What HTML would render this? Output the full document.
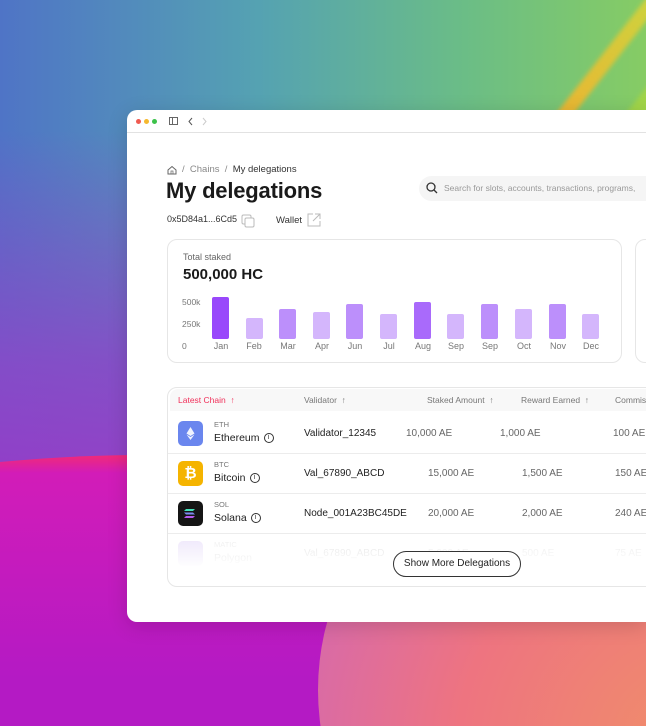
<!DOCTYPE html>
<html><head><meta charset="utf-8"><style>
*{box-sizing:border-box;margin:0;padding:0}
html,body{width:646px;height:726px;overflow:hidden}
body{position:relative;font-family:"Liberation Sans",sans-serif;background:#6a80c0}
.bg{position:absolute;left:0;top:0;width:646px;height:726px;overflow:hidden;
background:linear-gradient(90deg,#4f74c6 0%,#55a2b2 40%,#6bbd86 72%,#86cc64 100%);}
.bgv{position:absolute;inset:0;background:linear-gradient(180deg,rgba(0,0,0,0) 0%,rgba(0,0,0,0) 18%,rgba(140,70,200,.85) 50%,rgba(180,30,200,1) 100%)}
.mag{position:absolute;left:-700px;top:455px;width:1700px;height:900px;border-radius:50%;background:linear-gradient(180deg,#f02a78 0,#d21cb8 2%,#b41ac4 25%,#b01ac0 100%)}
.peach{position:absolute;left:318px;top:390px;width:700px;height:600px;border-radius:50%;background:radial-gradient(ellipse at 55% 60%,#f09068 0%,#ee7480 45%,#d86aa8 75%)}
.stripe{position:absolute;left:600px;top:-40px;width:14px;height:200px;background:linear-gradient(#c8d840,#f0b030);transform:rotate(38deg);filter:blur(2px)}
.lime{position:absolute;left:660px;top:0;width:200px;height:140px;background:#a0d448;transform:skewX(-38deg);filter:blur(3px)}
.win{position:absolute;left:127px;top:110px;width:519px;height:512px;background:#fff;border-radius:10px 0 0 10px;overflow:hidden;box-shadow:0 4px 20px rgba(0,0,0,.15)}
.tb{height:23px;border-bottom:1px solid #e2e2e2;position:relative}
.d{position:absolute;top:9px;width:5px;height:5px;border-radius:50%}
.t{position:absolute;white-space:nowrap}
.card{position:absolute;border:1px solid #e6e6e6;border-radius:10px;background:#fff}
.bar{position:absolute;bottom:0;width:17px;border-radius:2px}
.ml{position:absolute;top:228px;font-size:9px;color:#777;width:40px;text-align:center}
.hd{font-size:8.5px;color:#777}
.ic{position:absolute;width:25px;height:25px;border-radius:5px}
.row{position:absolute;left:0;right:0;border-top:1px solid #ececec}
.v{font-size:10px;color:#222}
.g{font-size:10px;color:#666}
.i{display:inline-block;width:10px;height:10px;border:1px solid #333;border-radius:50%;font-size:7px;text-align:center;line-height:8px;vertical-align:middle;margin-left:4px;color:#333}
</style></head><body>
<div class="bg">
<div class="bgv"></div>
<div class="lime"></div>
<div class="stripe"></div>
<div class="mag"></div>
<div class="peach"></div>
</div>
<div class="win">
 <div class="tb">
  <div class="d" style="left:9px;background:#f05a50"></div>
  <div class="d" style="left:17px;background:#f5b82e"></div>
  <div class="d" style="left:25px;background:#3cc24a"></div>
  <svg style="position:absolute;left:42px;top:7px" width="9" height="8"><rect x=".5" y=".5" width="8" height="7" fill="none" stroke="#666"/><line x1="3.5" y1="1" x2="3.5" y2="7" stroke="#666"/></svg>
  <svg style="position:absolute;left:61px;top:7px" width="5" height="9"><path d="M4 1L1 4.5 4 8" fill="none" stroke="#555"/></svg>
  <svg style="position:absolute;left:75px;top:7px" width="5" height="9"><path d="M1 1L4 4.5 1 8" fill="none" stroke="#ccc"/></svg>
 </div>
 <svg style="position:absolute;left:40px;top:55px" width="10" height="10"><path d="M1 5L5 1.5 9 5V9H1Z" fill="none" stroke="#666"/><rect x="4" y="6" width="2" height="3" fill="none" stroke="#666" stroke-width=".7"/></svg>
 <div class="t" style="left:55px;top:54px;font-size:9.5px;color:#888">/&nbsp;&nbsp;Chains&nbsp;&nbsp;/&nbsp;&nbsp;<span style="color:#333">My delegations</span></div>
 <div class="t" style="left:39px;top:68px;font-size:22px;font-weight:bold;color:#1a1a1a;letter-spacing:-.2px">My delegations</div>
 <div style="position:absolute;left:292px;top:66px;width:300px;height:25px;background:#f5f5f5;border-radius:13px"></div>
 <svg style="position:absolute;left:299px;top:72px" width="12" height="12"><circle cx="5" cy="5" r="4" fill="none" stroke="#333" stroke-width="1.3"/><line x1="8" y1="8" x2="11" y2="11" stroke="#333" stroke-width="1.3"/></svg>
 <div class="t" style="left:317px;top:73px;font-size:8.5px;color:#999">Search for slots, accounts, transactions, programs,</div>
 <div class="t" style="left:40px;top:104px;font-size:9px;color:#333">0x5D84a1...6Cd5</div>
 <svg style="position:absolute;left:114px;top:104px" width="14" height="14"><rect x="1" y="1" width="9" height="9" rx="1.5" fill="none" stroke="#bbb"/><rect x="4" y="4" width="9" height="9" rx="1.5" fill="#fff" stroke="#bbb"/></svg>
 <div class="t" style="left:149px;top:105px;font-size:9.5px;color:#333">Wallet</div>
 <svg style="position:absolute;left:180px;top:103px" width="14" height="14"><path d="M6 1H1V13H13V8M8 1H13V6M13 1L6 8" fill="none" stroke="#bbb"/></svg>
 <div class="card" style="left:40px;top:129px;width:455px;height:124px">
  <div class="t" style="left:15px;top:12px;font-size:9px;color:#666">Total staked</div>
  <div class="t" style="left:15px;top:26px;font-size:15px;font-weight:bold;color:#1a1a1a">500,000 HC</div>
  <div class="t" style="left:14px;top:57px;font-size:8.5px;color:#777">500k</div>
  <div class="t" style="left:14px;top:79px;font-size:8.5px;color:#777">250k</div>
  <div class="t" style="left:14px;top:101px;font-size:8.5px;color:#777">0</div>
  <div style="position:absolute;left:0;top:0;width:455px;height:99px">
   <div class="bar" style="left:44px;height:42px;background:#9948fb"></div>
   <div class="bar" style="left:78px;height:21px;background:#d4b6fc"></div>
   <div class="bar" style="left:111px;height:30px;background:#bc8ffb"></div>
   <div class="bar" style="left:145px;height:27px;background:#d4b6fc"></div>
   <div class="bar" style="left:178px;height:35px;background:#bc8ffb"></div>
   <div class="bar" style="left:212px;height:25px;background:#d4b6fc"></div>
   <div class="bar" style="left:246px;height:37px;background:#a96afb"></div>
   <div class="bar" style="left:279px;height:25px;background:#d4b6fc"></div>
   <div class="bar" style="left:313px;height:35px;background:#bc8ffb"></div>
   <div class="bar" style="left:347px;height:30px;background:#d4b6fc"></div>
   <div class="bar" style="left:381px;height:35px;background:#bc8ffb"></div>
   <div class="bar" style="left:414px;height:25px;background:#d4b6fc"></div>
  </div>
  <div style="position:absolute;left:0;top:-127px">
  <div class="ml" style="left:33px">Jan</div><div class="ml" style="left:66px">Feb</div><div class="ml" style="left:100px">Mar</div><div class="ml" style="left:134px">Apr</div><div class="ml" style="left:167px">Jun</div><div class="ml" style="left:201px">Jul</div><div class="ml" style="left:235px">Aug</div><div class="ml" style="left:268px">Sep</div><div class="ml" style="left:302px">Sep</div><div class="ml" style="left:336px">Oct</div><div class="ml" style="left:370px">Nov</div><div class="ml" style="left:403px">Dec</div>
  </div>
 </div>
 <div class="card" style="left:508px;top:129px;width:60px;height:124px"></div>
 <div class="card" style="left:40px;top:277px;width:540px;height:200px;overflow:hidden">
  <div style="position:absolute;left:2px;top:1px;right:0;height:22px;background:#f8f8f8;border-radius:8px 0 0 0"></div>
  <div class="t hd" style="left:10px;top:7px;color:#f0305a">Latest Chain&nbsp;&nbsp;↑</div>
  <div class="t hd" style="left:136px;top:7px">Validator&nbsp;&nbsp;↑</div>
  <div class="t hd" style="left:259px;top:7px">Staked Amount&nbsp;&nbsp;↑</div>
  <div class="t hd" style="left:353px;top:7px">Reward Earned&nbsp;&nbsp;↑</div>
  <div class="t hd" style="left:447px;top:7px">Commission</div>
  <div class="ic" style="left:10px;top:33px;background:#6a86ee"><svg width="25" height="25"><path d="M12.5 6L8.5 12.5 12.5 15 16.5 12.5Z M8.5 13.5L12.5 19 16.5 13.5 12.5 16Z" fill="#fff" opacity=".9"/></svg></div>
  <div class="t" style="left:46px;top:32px;font-size:7.5px;color:#777">ETH</div>
  <div class="t" style="left:46px;top:44px;font-size:10.5px;color:#222">Ethereum<span class="i">i</span></div>
  <div class="t v" style="left:136px;top:40px">Validator_12345</div>
  <div class="t g" style="left:238px;top:40px">10,000 AE</div>
  <div class="t g" style="left:332px;top:40px">1,000 AE</div>
  <div class="t g" style="left:445px;top:40px">100 AE</div>
  <div class="row" style="top:65px"></div>
  <div class="ic" style="left:10px;top:73px;background:#f5b400"><div style="color:#fff;font-weight:bold;font-size:15px;text-align:center;line-height:25px">₿</div></div>
  <div class="t" style="left:46px;top:72px;font-size:7.5px;color:#777">BTC</div>
  <div class="t" style="left:46px;top:84px;font-size:10.5px;color:#222">Bitcoin<span class="i">i</span></div>
  <div class="t v" style="left:136px;top:80px">Val_67890_ABCD</div>
  <div class="t g" style="left:260px;top:80px">15,000 AE</div>
  <div class="t g" style="left:354px;top:80px">1,500 AE</div>
  <div class="t g" style="left:447px;top:80px">150 AE</div>
  <div class="row" style="top:105px"></div>
  <div class="ic" style="left:10px;top:113px;background:#151515"><svg width="25" height="25"><path d="M8 8H17L15 10H6Z" fill="#45e0b8"/><path d="M6 11.5H15L17 13.5H8Z" fill="#7a8cf0"/><path d="M8 15H17L15 17H6Z" fill="#b65af0"/></svg></div>
  <div class="t" style="left:46px;top:112px;font-size:7.5px;color:#777">SOL</div>
  <div class="t" style="left:46px;top:124px;font-size:10.5px;color:#222">Solana<span class="i">i</span></div>
  <div class="t v" style="left:136px;top:120px">Node_001A23BC45DE</div>
  <div class="t g" style="left:260px;top:120px">20,000 AE</div>
  <div class="t g" style="left:354px;top:120px">2,000 AE</div>
  <div class="t g" style="left:447px;top:120px">240 AE</div>
  <div class="row" style="top:145px"></div>
  <div style="opacity:.12">
  <div class="ic" style="left:10px;top:153px;background:#8247e5"></div>
  <div class="t" style="left:46px;top:152px;font-size:7.5px;color:#777">MATIC</div>
  <div class="t" style="left:46px;top:164px;font-size:10.5px;color:#222">Polygon</div>
  <div class="t v" style="left:136px;top:160px">Val_67890_ABCD</div>
  <div class="t g" style="left:260px;top:160px">5,000 AE</div>
  <div class="t g" style="left:354px;top:160px">500 AE</div>
  <div class="t g" style="left:447px;top:160px">75 AE</div>
  </div>
  <div style="position:absolute;left:0;right:0;top:150px;height:30px;background:linear-gradient(rgba(255,255,255,0),#fff)"></div>
  <div class="t" style="left:225px;top:163px;width:128px;height:26px;border:1px solid #333;border-radius:13px;background:#fff;font-size:10px;color:#222;text-align:center;line-height:24px">Show More Delegations</div>
 </div>
</div>
</body></html>
